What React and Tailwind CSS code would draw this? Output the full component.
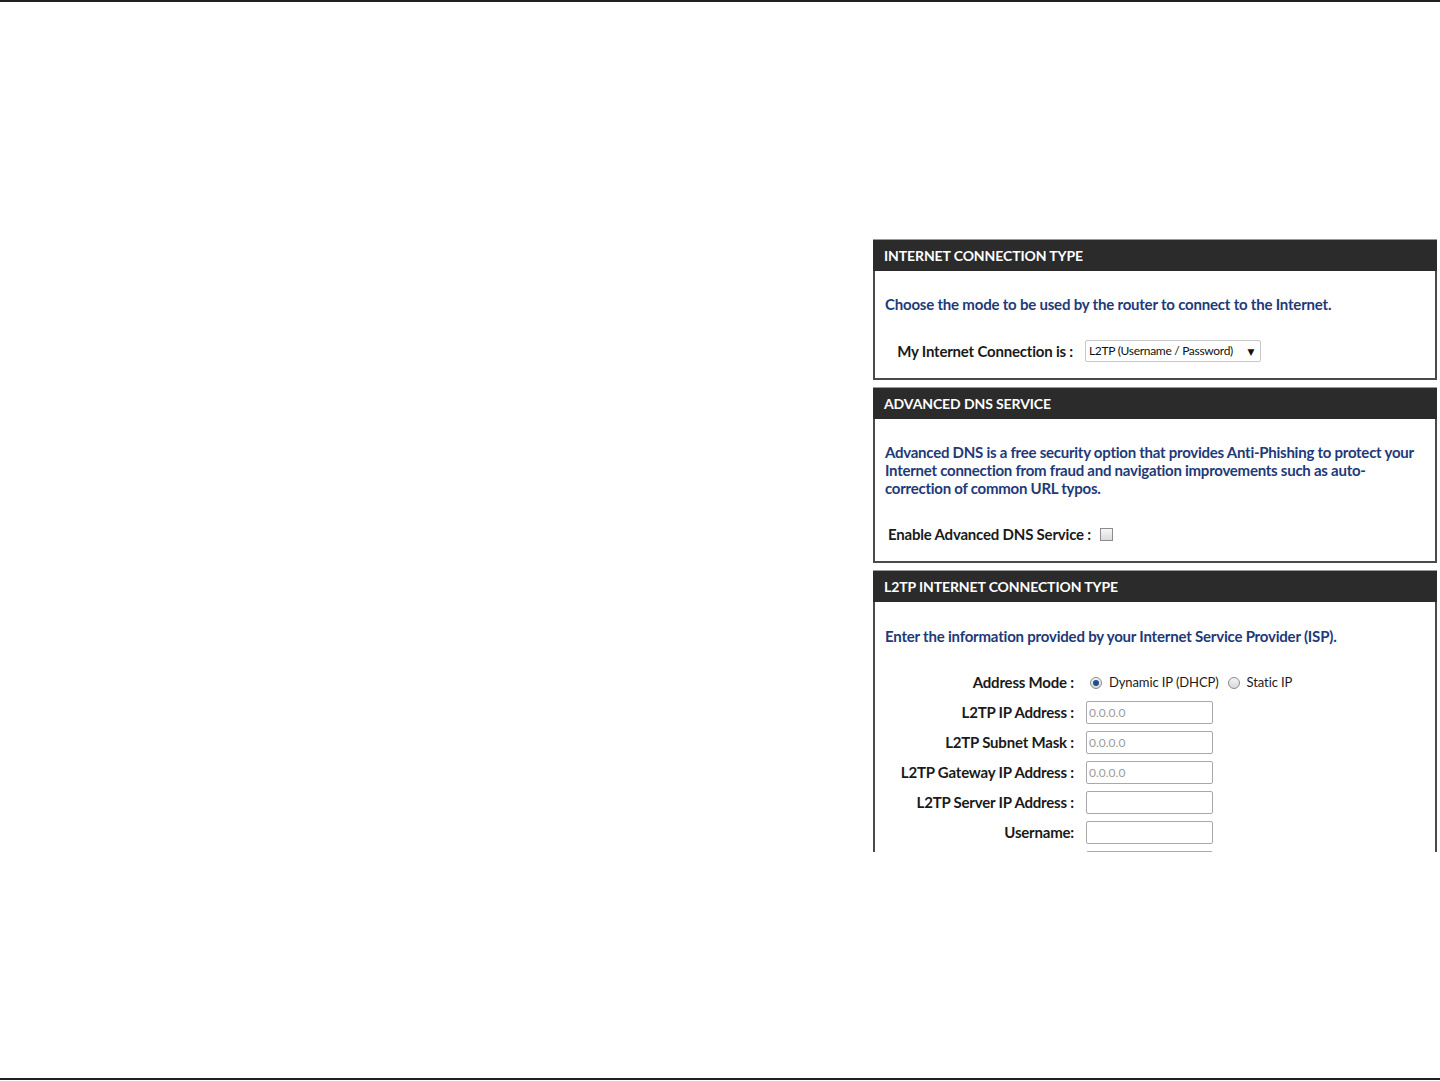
const font = { fontFamily: 'Lato, "DejaVu Sans", sans-serif' };

const Header = ({ title }) => (
  <div className="h-[32px] bg-[#2b2b2b] border-t border-[#9a9a9a] flex items-center px-[11px] text-[14px] font-bold text-white tracking-[-0.1px]">
    {title}
  </div>
);

const Field = ({ label, value }) => (
  <div className="flex items-center h-[30px]">
    <div className="w-[199px] text-right text-[15px] font-bold text-[#1a1a1a] tracking-[-0.2px]">{label}</div>
    <div className="ml-[12px] w-[127px] h-[23px] border border-[#a9a9a9] rounded-[2px] bg-white flex items-center px-[2px] text-[12px] text-[#9b9b9b]">
      {value}
    </div>
  </div>
);

const Radio = ({ checked }) => (
  <span className="w-[12px] h-[12px] rounded-full border border-[#8c8c8c] bg-gradient-to-b from-[#f4f4f4] to-[#d8d8d8] flex items-center justify-center">
    {checked && <span className="w-[6px] h-[6px] rounded-full bg-[#1f4f8f]" />}
  </span>
);

export default function App() {
  return (
    <div className="w-[1440px] h-[1081px] bg-white flex flex-col" style={font}>
      <div className="h-[2px] bg-[#231f20]" />
      <div className="flex justify-end pr-[3px] pt-[237px]">
        <div className="w-[564px] h-[613px] overflow-hidden flex flex-col gap-[7px]">
          {/* Internet connection type */}
          <div>
            <Header title="INTERNET CONNECTION TYPE" />
            <div className="border-x-2 border-b-2 border-[#4a4a4a] pt-[24px] pb-[15px]">
              <p className="px-[10px] text-[15px] leading-[18px] font-bold text-[#1e3a78] tracking-[-0.2px]">
                Choose the mode to be used by the router to connect to the Internet.
              </p>
              <div className="flex items-center mt-[27px]">
                <div className="w-[198px] text-right text-[15px] font-bold text-[#1a1a1a] tracking-[-0.2px]">My Internet Connection is :</div>
                <div className="ml-[12px] w-[176px] h-[22px] border border-[#c8c8c8] rounded-[2px] bg-white flex items-center justify-between pl-[3px] pr-[6px] text-[12px] text-[#111] tracking-[-0.3px]">
                  <span>L2TP (Username / Password)</span>
                  <span className="text-[9px]">▼</span>
                </div>
              </div>
            </div>
          </div>

          {/* Advanced DNS */}
          <div>
            <Header title="ADVANCED DNS SERVICE" />
            <div className="border-x-2 border-b-2 border-[#4a4a4a] pt-[24px] pb-[17px]">
              <p className="pl-[10px] pr-[6px] text-[15px] leading-[18px] font-bold text-[#1e3a78] tracking-[-0.25px]">
                Advanced DNS is a free security option that provides Anti-Phishing to protect your Internet connection from fraud and navigation improvements such as auto-correction of common URL typos.
              </p>
              <div className="flex items-center mt-[29px] h-[18px] pl-[13px]">
                <span className="text-[15px] font-bold text-[#1a1a1a] tracking-[-0.2px]">Enable Advanced DNS Service :</span>
                <span className="ml-[9px] w-[13px] h-[13px] border border-[#8c8c8c] bg-gradient-to-b from-[#f6f6f6] to-[#dcdcdc]" />
              </div>
            </div>
          </div>

          {/* L2TP */}
          <div className="flex-1 flex flex-col">
            <Header title="L2TP INTERNET CONNECTION TYPE" />
            <div className="flex-1 border-x-2 border-[#4a4a4a] pt-[25px]">
              <p className="px-[10px] text-[15px] leading-[18px] font-bold text-[#1e3a78] tracking-[-0.2px]">
                Enter the information provided by your Internet Service Provider (ISP).
              </p>
              <div className="mt-[23px] flex items-center h-[30px]">
                <div className="w-[199px] text-right text-[15px] font-bold text-[#1a1a1a] tracking-[-0.2px]">Address Mode :</div>
                <div className="ml-[16px] flex items-center gap-[7px] text-[13px] text-[#1a1a1a] tracking-[-0.1px]">
                  <Radio checked />
                  <span>Dynamic IP (DHCP)</span>
                  <span className="ml-[2px]"><Radio /></span>
                  <span>Static IP</span>
                </div>
              </div>
              <Field label="L2TP IP Address :" value="0.0.0.0" />
              <Field label="L2TP Subnet Mask :" value="0.0.0.0" />
              <Field label="L2TP Gateway IP Address :" value="0.0.0.0" />
              <Field label="L2TP Server IP Address :" value="" />
              <Field label="Username:" value="" />
              <Field label="" value="" />
            </div>
          </div>
        </div>
      </div>
      <div className="mt-auto mb-[1px] h-[2px] bg-[#231f20]" />
    </div>
  );
}
